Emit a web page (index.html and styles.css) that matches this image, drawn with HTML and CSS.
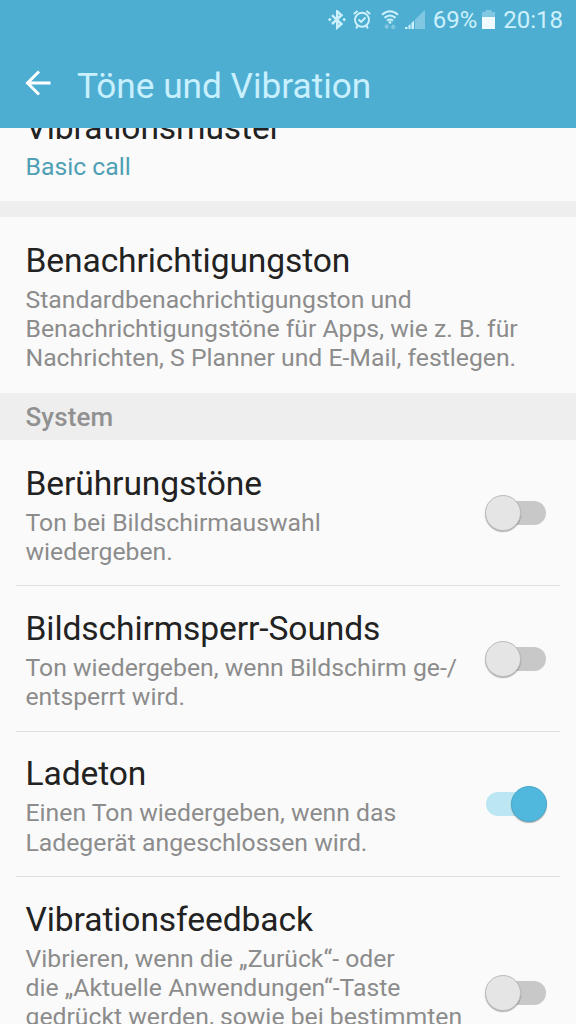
FILE: index.html
```html
<!DOCTYPE html>
<html lang="de">
<head>
  <meta charset="utf-8">
  <title>Töne und Vibration</title>
  <link rel="stylesheet" href="styles.css">
</head>
<body>
  <div class="screen">
    <header class="header">
      <div class="status-bar">
        <svg class="icon-bluetooth" width="18" height="20" viewBox="0 0 18 20" fill="none" stroke="currentColor" stroke-width="2.4">
          <path d="M4 5.200l9.500 8.800-4.300 3.600V1.400l4.300 3.800L4 14"/>
          <path d="M0 9.600l1.800-1.800 1.800 1.800-1.800 1.800zM14.400 9.600l1.800-1.800L18 9.600l-1.800 1.800z" fill="currentColor" stroke="none"/>
        </svg>
        <svg class="icon-alarm" width="18" height="20" viewBox="0 0 18 20" fill="none" stroke="currentColor" stroke-width="1.900">
          <circle cx="9" cy="9.800" r="7"/>
          <path d="M5.500 9.500l2.700 2.500 4.300-4.500M.8 4L4.500 1M17.200 4L13.500 1M4.500 15.500L3.200 18.500M13.500 15.500l1.300 3"/>
        </svg>
        <svg class="icon-wifi" width="18" height="20" viewBox="0 0 18 20" fill="none" stroke="currentColor" stroke-width="2.100">
          <path d="M1 4.700Q9-2.200 17 4.700M3.500 7.900Q9 3.100 14.500 7.900M6 10.700Q9 8.300 12 10.700"/>
          <circle cx="9" cy="12.400" r="1.400" fill="currentColor" stroke="none"/>
          <path class="dim" d="M4.200 14.500h3.200v2h1.200l-2.800 2.800L3 16.500h1.200zM10.600 19v-2H9.400l2.800-2.800L15 17h-1.200v2z" fill="currentColor" stroke="none"/>
        </svg>
        <svg class="icon-signal" width="20" height="20" viewBox="0 0 20 20" fill="currentColor">
          <path class="dim" d="M10 9.500L20 0v19H10z"/>
          <path d="M0 17h2.500v2H0zM3.500 15.500L5.500 14v5h-2zM6.500 13L9 10.600V19H6.500z"/>
        </svg>
        <span class="percent">69%</span>
        <svg class="icon-battery" width="13" height="20" viewBox="0 0 13 20" fill="currentColor">
          <path class="dim" d="M3.500 0h6v2H13v6H0V2h3.500z"/>
          <path class="charge" d="M0 7h13v12H0z"/>
        </svg>
        <span class="clock">20:18</span>
      </div>
      <div class="title-bar">
        <svg class="back" width="26" height="26" viewBox="0 0 26 26" fill="none" stroke="currentColor" stroke-width="3">
          <path d="M25.500 13H2.500M14 1.500L2.500 13 14 24.500"/>
        </svg>
        <h1>Töne und Vibration</h1>
      </div>
    </header>

    <main class="content">
      <div class="list">
        <div class="row plain">
          <div class="text">
            <h2>Vibrationsmuster</h2>
            <p class="value">Basic call</p>
          </div>
        </div>
        <div class="spacer"></div>
        <div class="row plain">
          <div class="text">
            <h2>Benachrichtigungston</h2>
            <p>Standardbenachrichtigungston und<br>Benachrichtigungstöne für Apps, wie z. B. für<br>Nachrichten, S Planner und E-Mail, festlegen.</p>
          </div>
        </div>
        <h3 class="section">System</h3>
        <div class="row">
          <div class="text">
            <h2>Berührungstöne</h2>
            <p>Ton bei Bildschirmauswahl<br>wiedergeben.</p>
          </div>
          <div class="switch"><span class="thumb"></span></div>
        </div>
        <div class="divider"></div>
        <div class="row">
          <div class="text">
            <h2>Bildschirmsperr-Sounds</h2>
            <p>Ton wiedergeben, wenn Bildschirm ge-/<br>entsperrt wird.</p>
          </div>
          <div class="switch"><span class="thumb"></span></div>
        </div>
        <div class="divider"></div>
        <div class="row">
          <div class="text">
            <h2>Ladeton</h2>
            <p>Einen Ton wiedergeben, wenn das<br>Ladegerät angeschlossen wird.</p>
          </div>
          <div class="switch on"><span class="thumb"></span></div>
        </div>
        <div class="divider"></div>
        <div class="row long">
          <div class="text">
            <h2>Vibrationsfeedback</h2>
            <p>Vibrieren, wenn die „Zurück“- oder<br>die „Aktuelle Anwendungen“-Taste<br>gedrückt werden, sowie bei bestimmten</p>
          </div>
          <div class="switch"><span class="thumb"></span></div>
        </div>
      </div>
    </main>
  </div>
</body>
</html>
```

FILE: styles.css
```css
* {
  box-sizing: border-box;
}
body {
  margin: 0;
  font-family: Roboto, "Noto Sans", sans-serif;
  background: #fafafa;
}
h1, h2, h3, p {
  margin: 0;
  font-weight: 400;
  white-space: nowrap;
}
svg {
  display: block;
  flex: none;
}
.screen {
  display: flex;
  flex-direction: column;
  height: 1024px;
  overflow: hidden;
}
.header {
  flex: none;
  height: 128px;
  background: #4eaed1;
}
.status-bar {
  display: flex;
  align-items: center;
  justify-content: flex-end;
  height: 40px;
  padding-right: 13px;
  color: #cdf1fc;
  font-size: 24px;
}
.dim {
  opacity: 0.4;
}
.icon-bluetooth {
  margin-right: 7px;
}
.icon-alarm {
  margin-right: 10px;
}
.icon-wifi {
  margin-right: 6px;
}
.icon-signal {
  margin-right: 8px;
}
.percent {
  margin-right: 5px;
}
.icon-battery {
  margin-right: 8px;
}
.charge {
  fill: #effbff;
}
.title-bar {
  display: flex;
  align-items: center;
  height: 88px;
  padding: 0 0 2px 25px;
}
.back {
  margin-right: 26px;
  color: #fff;
}
.title-bar h1 {
  padding-top: 5px;
  color: #c8f0ff;
  font-size: 35.2px;
  line-height: 42px;
}
.content {
  flex: 1;
  min-height: 0;
  overflow: hidden;
}
/* list is scrolled a little */
.list {
  margin-top: -43.6px;
}
.row {
  display: flex;
  align-items: center;
  justify-content: space-between;
  padding: 22.6px 30px 19.4px 25.5px;
}
.row.plain {
  padding-top: 23.5px;
  padding-bottom: 19.9px;
}
.row.plain + .section {
  margin-top: 1px;
}
.section + .row {
  padding-top: 23.6px;
}
.row.long {
  padding-bottom: 78px;
}
.row h2 {
  color: #222;
  font-size: 33.6px;
  letter-spacing: -0.1px;
  line-height: 40px;
  margin-bottom: 4px;
}
.row p {
  color: #8c8c8c;
  font-size: 24.75px;
  line-height: 29.2px;
}
.row .value {
  color: #4fa0b5;
}
.spacer {
  height: 16px;
  background: #eee;
}
.section {
  height: 47px;
  padding-left: 25.5px;
  background: #eee;
  color: #919191;
  font-size: 26px;
  font-weight: 500;
  letter-spacing: 0.1px;
  line-height: 49px;
}
.divider {
  height: 1px;
  margin: 0 16px;
  background: #dedede;
}
.switch {
  display: flex;
  align-items: center;
  flex: none;
  width: 60px;
  height: 24px;
  margin-bottom: 3px;
  border-radius: 12px;
  background: #c8c8c8;
}
.row.long .switch {
  margin: 55px 0 0;
}
.thumb {
  flex: none;
  width: 36px;
  height: 36px;
  margin: 0 -1px;
  border-radius: 50%;
  background: #e5e5e5;
  border: 1px solid #bdbdbd;
  box-shadow: 0 1px 1px rgba(0, 0, 0, 0.3);
}
.switch.on {
  justify-content: flex-end;
  background: #bce7f2;
}
.switch.on .thumb {
  background: #50b8dc;
  border-color: #4aa9cb;
}
```
